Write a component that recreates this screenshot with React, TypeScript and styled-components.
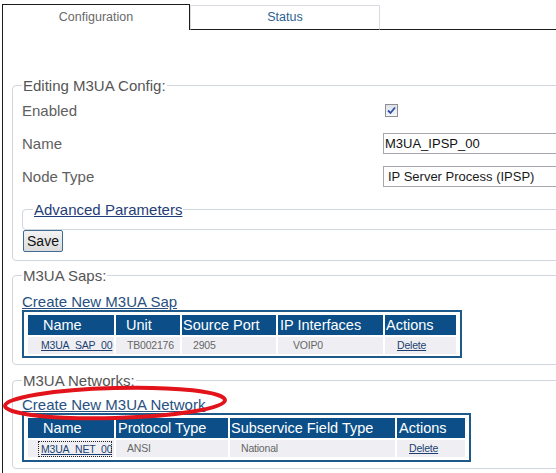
import styled, { createGlobalStyle } from 'styled-components';

const GlobalStyle = createGlobalStyle`
  html, body {
    margin: 0;
    background: #fff;
    overflow: hidden;
  }
  body {
    font-family: "Liberation Sans", Arial, Helvetica, sans-serif;
  }
`;

const Page = styled.div`
  position: relative;
  width: 760px;
  height: 473px;
  padding: 4px 0 0 2px;
  box-sizing: border-box;
`;

const TabBar = styled.div`
  display: flex;
  align-items: flex-end;
`;

const Tab = styled.div<{ $active?: boolean }>`
  box-sizing: border-box;
  width: ${({ $active }) => ($active ? 188 : 190)}px;
  height: ${({ $active }) => ($active ? 26 : 25)}px;
  padding-top: ${({ $active }) => ($active ? 5 : 4)}px;
  border: 1px solid ${({ $active }) => ($active ? '#1c1c1c' : '#d9dae2')};
  border-bottom: ${({ $active }) => ($active ? 'none' : '1px solid #1c1c1c')};
  text-align: center;
  font-size: 12.5px;
  line-height: 15px;
  color: ${({ $active }) => ($active ? '#6a6a6a' : '#2c5f92')};
`;

const TabFill = styled.div`
  flex: 1;
  border-bottom: 1px solid #1c1c1c;
`;

const Panel = styled.div`
  box-sizing: border-box;
  height: 443px;
  border-left: 1px solid #1c1c1c;
  padding: 47px 0 0 9px;
`;

const Group = styled.fieldset<{ $top?: number; $bottom?: number; $left?: number }>`
  margin: ${({ $top = 0 }) => $top}px 0 0;
  padding: 0 0 ${({ $bottom = 6 }) => $bottom}px ${({ $left = 9 }) => $left}px;
  border: 1px solid #d0d6de;
  border-radius: 4px;
  min-width: 0;
`;

const Legend = styled.legend`
  padding: 0 1px;
  font-size: 15px;
  line-height: 17px;
  color: #555;
`;

const FormGrid = styled.div`
  display: grid;
  grid-template-columns: 361px 1fr;
  grid-auto-rows: 33px;
  align-items: center;
`;

const Label = styled.div`
  font-size: 15px;
  color: #606060;
`;

const CheckBox = styled.span`
  box-sizing: border-box;
  width: 13px;
  height: 13px;
  margin-left: 2px;
  border: 1px solid #8e8f94;
  background: linear-gradient(#dde2ea, #f6f6f8);
  display: flex;
  align-items: center;
  justify-content: center;
`;

const TextInput = styled.input`
  box-sizing: border-box;
  width: 240px;
  height: 21px;
  margin: 0;
  padding: 0 1px;
  border: 1px solid #a4a8ae;
  font-family: "Liberation Sans", Arial, sans-serif;
  font-size: 13px;
  color: #111;
  background: #fff;
  outline: none;
`;

const Select = styled.select`
  box-sizing: border-box;
  width: 240px;
  height: 21px;
  margin: 0;
  padding: 0 0 0 4px;
  border: 1px solid #a4a8ae;
  border-radius: 0;
  appearance: none;
  font-family: "Liberation Sans", Arial, sans-serif;
  font-size: 13px;
  color: #1a1a1a;
  background: #fff;
`;

const Link = styled.a<{ $size?: number; $color?: string }>`
  font-size: ${({ $size = 15 }) => $size}px;
  color: ${({ $color = '#1f3d78' }) => $color};
  text-decoration: underline;
  cursor: pointer;
`;

const BlockLink = styled(Link)<{ $gap: number }>`
  display: block;
  width: max-content;
  margin-top: ${({ $gap }) => $gap}px;
  line-height: 17px;
`;

const SaveButton = styled.button`
  box-sizing: border-box;
  display: block;
  width: 40px;
  height: 22px;
  margin: 0 0 0 1px;
  padding: 0;
  border: 1px solid #3f6b94;
  border-radius: 2px;
  background: linear-gradient(#f3f3f3, #dcdcdc);
  font-family: "Liberation Sans", Arial, sans-serif;
  font-size: 14px;
  color: #111;
`;

const Table = styled.table<{ $width: number; $bottom?: number }>`
  box-sizing: border-box;
  width: ${({ $width }) => $width}px;
  border: 2px solid #1d5a8a;
  border-collapse: separate;
  border-spacing: 2px;
  padding: 1px 2px ${({ $bottom = 0 }) => $bottom}px;
  table-layout: fixed;
`;

const Th = styled.th<{ $w: number; $pl: number }>`
  box-sizing: border-box;
  width: ${({ $w }) => $w}px;
  height: 20px;
  padding: 0 0 0 ${({ $pl }) => $pl}px;
  background: #0c4f88;
  color: #fff;
  font-size: 14.5px;
  font-weight: normal;
  text-align: left;
  line-height: 20px;
  white-space: nowrap;
  overflow: hidden;
`;

const Td = styled.td<{ $pl: number }>`
  box-sizing: border-box;
  height: 17px;
  padding: 0 0 0 ${({ $pl }) => $pl}px;
  background: #efeff3;
  color: #666;
  font-size: 10.5px;
  letter-spacing: -0.2px;
  line-height: 17px;
  white-space: nowrap;
  overflow: hidden;
`;

const FocusLink = styled(Link)`
  display: block;
  margin: 0 2px 0 -3px;
  padding-left: 3px;
  overflow: hidden;
  outline: 1px dotted #222;
  outline-offset: -1px;
  line-height: 16px;
`;

const Annotation = styled.svg`
  position: absolute;
  left: 0;
  top: 381px;
  pointer-events: none;
`;

const Check = () => (
  <svg width="9" height="9" viewBox="0 0 9 9">
    <path d="M1 4.5 L3.5 7 L8 1.5" fill="none" stroke="#2b4fa3" strokeWidth="1.8" />
  </svg>
);

type Col = { title: string; w: number; pl: number };

const sapCols: Col[] = [
  { title: 'Name', w: 86, pl: 15 },
  { title: 'Unit', w: 64, pl: 10 },
  { title: 'Source Port', w: 94, pl: 1 },
  { title: 'IP Interfaces', w: 105, pl: 2 },
  { title: 'Actions', w: 71, pl: 1 },
];

const networkCols: Col[] = [
  { title: 'Name', w: 86, pl: 15 },
  { title: 'Protocol Type', w: 112, pl: 2 },
  { title: 'Subservice Field Type', w: 165, pl: 1 },
  { title: 'Actions', w: 68, pl: 2 },
];

// columns + cell spacing + table padding + border
const tableWidth = (cols: Col[]) =>
  cols.reduce((sum, c) => sum + c.w, 0) + (cols.length + 1) * 2 + 4 + 4;

function HeaderRow({ cols }: { cols: Col[] }) {
  return (
    <tr>
      {cols.map((c) => (
        <Th key={c.title} $w={c.w} $pl={c.pl}>
          {c.title}
        </Th>
      ))}
    </tr>
  );
}

export default function App() {
  return (
    <>
      <GlobalStyle />
      <Page>
        <TabBar>
          <Tab $active>Configuration</Tab>
          <Tab>Status</Tab>
          <TabFill />
        </TabBar>
        <Panel>
          <Group $bottom={8}>
            <Legend>Editing M3UA Config:</Legend>
            <FormGrid>
              <Label>Enabled</Label>
              <CheckBox>
                <Check />
              </CheckBox>
              <Label>Name</Label>
              <TextInput defaultValue="M3UA_IPSP_00" />
              <Label>Node Type</Label>
              <Select defaultValue="ipsp">
                <option value="ipsp">IP Server Process (IPSP)</option>
              </Select>
            </FormGrid>
            <Group $top={8} $bottom={11} $left={10}>
              <Legend>
                <Link>Advanced Parameters</Link>
              </Legend>
            </Group>
            <SaveButton>Save</SaveButton>
          </Group>

          <Group $top={6} $bottom={6}>
            <Legend>M3UA Saps:</Legend>
            <BlockLink $gap={9} $color="#28517f">
              Create New M3UA Sap
            </BlockLink>
            <Table $width={tableWidth(sapCols)}>
              <tbody>
                <HeaderRow cols={sapCols} />
                <tr>
                  <Td $pl={13}>
                    <Link $size={10.5} $color="#1d3f70">M3UA_SAP_00</Link>
                  </Td>
                  <Td $pl={11}>TB002176</Td>
                  <Td $pl={11}>2905</Td>
                  <Td $pl={15}>VOIP0</Td>
                  <Td $pl={12}>
                    <Link $size={10.5} $color="#1d3f70">Delete</Link>
                  </Td>
                </tr>
              </tbody>
            </Table>
          </Group>

          <Group $top={7} $bottom={6}>
            <Legend>M3UA Networks:</Legend>
            <BlockLink $gap={7} $color="#28517f">
              Create New M3UA Network
            </BlockLink>
            <Table $width={tableWidth(networkCols)} $bottom={1}>
              <tbody>
                <HeaderRow cols={networkCols} />
                <tr>
                  <Td $pl={13}>
                    <FocusLink $size={10.5} $color="#1d3f70">M3UA_NET_00</FocusLink>
                  </Td>
                  <Td $pl={11}>ANSI</Td>
                  <Td $pl={11}>National</Td>
                  <Td $pl={12}>
                    <Link $size={10.5} $color="#1d3f70">Delete</Link>
                  </Td>
                </tr>
              </tbody>
            </Table>
          </Group>
        </Panel>
        <Annotation width="240" height="46" viewBox="0 0 240 46">
          <ellipse
            cx="115"
            cy="22"
            rx="110"
            ry="15"
            fill="none"
            stroke="#e3131b"
            strokeWidth="4"
            transform="rotate(-1.5 115 22)"
          />
        </Annotation>
      </Page>
    </>
  );
}
